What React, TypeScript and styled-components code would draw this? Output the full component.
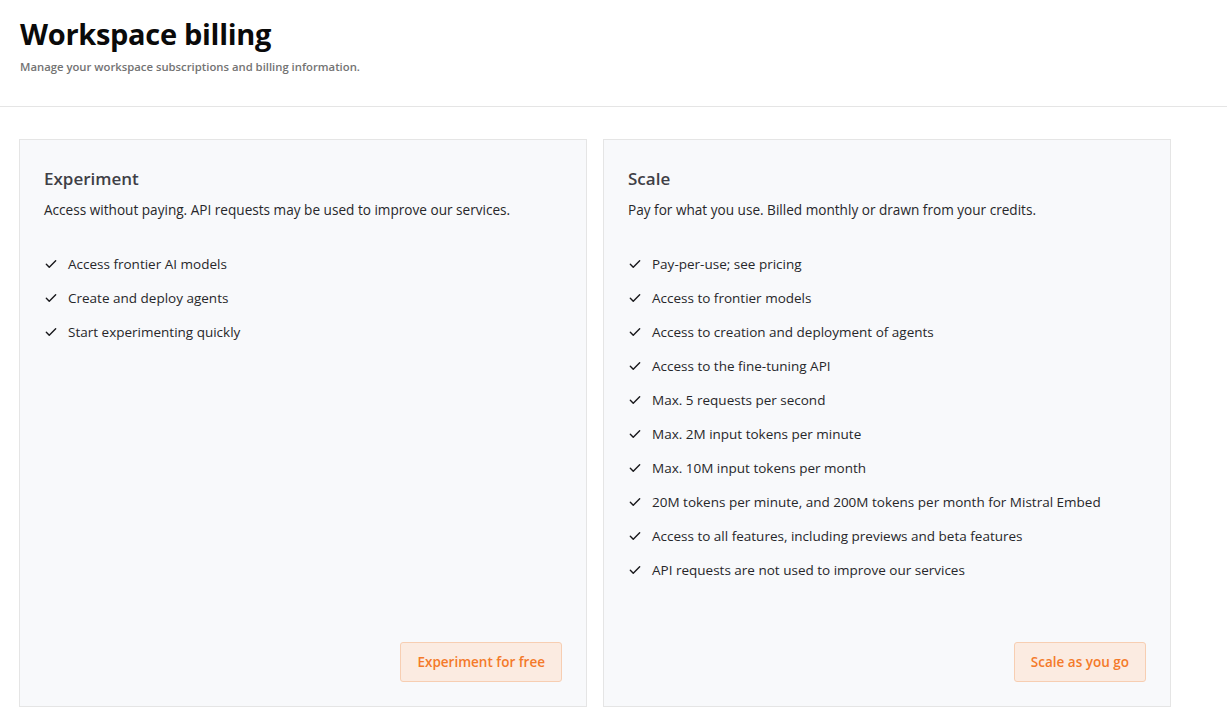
import React from 'react';
import styled, { createGlobalStyle } from 'styled-components';

const GlobalStyle = createGlobalStyle`
  html, body {
    margin: 0;
    padding: 0;
    background: #ffffff;
    font-family: "Open Sans", "Noto Sans", "Liberation Sans", sans-serif;
  }
`;

const Header = styled.div`
  padding: 16px 20px 0;
  height: 90px;
  border-bottom: 1px solid #e5e5e5;
`;

const Title = styled.h1`
  margin: 0;
  font-size: 29px;
  font-weight: 700;
  color: #0a0a0a;
  letter-spacing: -0.3px;
  line-height: 36px;
`;

const Subtitle = styled.p`
  margin: 7px 0 0;
  font-size: 11.3px;
  font-weight: 600;
  color: #737373;
`;

const Plans = styled.div`
  display: grid;
  grid-template-columns: 568px 568px;
  gap: 16px;
  padding: 32px 19px 0;
`;

const Card = styled.div`
  display: flex;
  flex-direction: column;
  height: 568px;
  box-sizing: border-box;
  background: #f8f9fb;
  border: 1px solid #e5e5e5;
  padding: 27px 24px 24px;
`;

const CardTitle = styled.h2`
  margin: 0;
  font-size: 17px;
  font-weight: 600;
  color: #3f3f46;
  line-height: 24px;
`;

const CardText = styled.p`
  margin: 9px 0 0;
  font-size: 13.6px;
  color: #27272a;
  line-height: 20px;
`;

const Features = styled.ul`
  list-style: none;
  margin: 34px 0 0;
  padding: 0;
  display: flex;
  flex-direction: column;
  gap: 14px;
`;

const Feature = styled.li`
  display: flex;
  align-items: center;
  gap: 10px;
  font-size: 13.5px;
  color: #27272a;
  line-height: 20px;
`;

const Footer = styled.div`
  margin-top: auto;
  display: flex;
  justify-content: flex-end;
`;

const Action = styled.button`
  height: 40px;
  padding: 0 16px;
  background: #fbebe1;
  border: 1px solid #f7ceb2;
  border-radius: 3px;
  color: #f47a2a;
  font-family: inherit;
  font-size: 13.5px;
  font-weight: 600;
  cursor: pointer;
`;

const Check = () => (
  <svg width="14" height="14" viewBox="0 0 24 24" fill="none" stroke="#18181b" strokeWidth="2.4" strokeLinecap="round" strokeLinejoin="round">
    <path d="M4 12.5l5 5L20 6.5" />
  </svg>
);

const plans = [
  {
    name: 'Experiment',
    text: 'Access without paying. API requests may be used to improve our services.',
    features: ['Access frontier AI models', 'Create and deploy agents', 'Start experimenting quickly'],
    action: 'Experiment for free',
  },
  {
    name: 'Scale',
    text: 'Pay for what you use. Billed monthly or drawn from your credits.',
    features: [
      'Pay-per-use; see pricing',
      'Access to frontier models',
      'Access to creation and deployment of agents',
      'Access to the fine-tuning API',
      'Max. 5 requests per second',
      'Max. 2M input tokens per minute',
      'Max. 10M input tokens per month',
      '20M tokens per minute, and 200M tokens per month for Mistral Embed',
      'Access to all features, including previews and beta features',
      'API requests are not used to improve our services',
    ],
    action: 'Scale as you go',
  },
];

const App: React.FC = () => {
  return (
    <>
      <GlobalStyle />
      <Header>
        <Title>Workspace billing</Title>
        <Subtitle>Manage your workspace subscriptions and billing information.</Subtitle>
      </Header>
      <Plans>
        {plans.map((p) => (
          <Card key={p.name}>
            <CardTitle>{p.name}</CardTitle>
            <CardText>{p.text}</CardText>
            <Features>
              {p.features.map((f) => (
                <Feature key={f}>
                  <Check />
                  {f}
                </Feature>
              ))}
            </Features>
            <Footer>
              <Action>{p.action}</Action>
            </Footer>
          </Card>
        ))}
      </Plans>
    </>
  );
};

export default App;
